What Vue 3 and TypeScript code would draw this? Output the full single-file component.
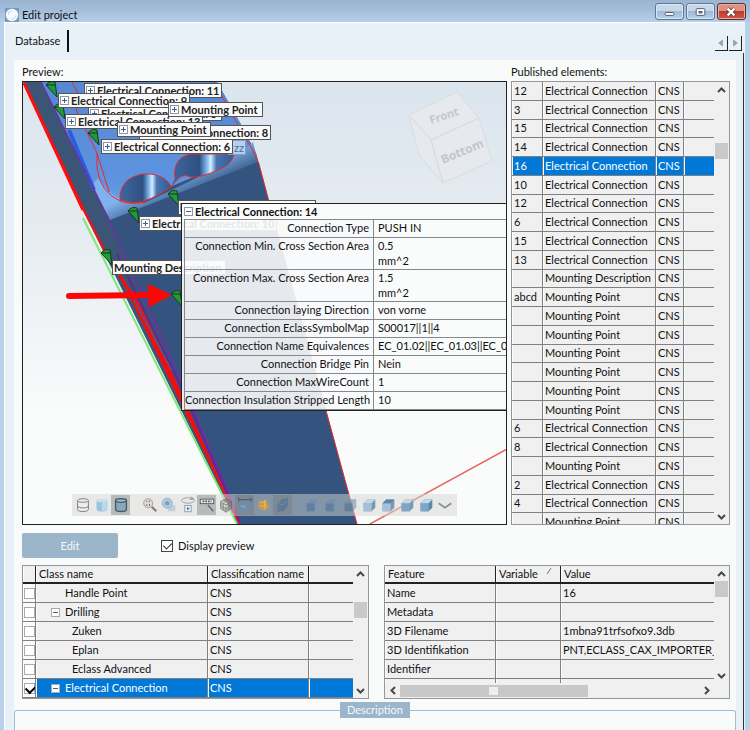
<script setup lang="ts">
import { ref } from 'vue'

interface Published { name: string; type: string }
interface Callout { text: string; x: number; y: number; w: number; plain?: boolean; faint?: boolean }
interface Feature { label: string; value: string; tall?: boolean }
interface ClassRow { name: string; level: number; branch: boolean; checked: boolean; selected?: boolean }

const EC = 'Electrical Connection'
const MP = 'Mounting Point'
const make = (name: string, type: string): Published => ({ name, type })

const published: Published[] = [
  ...['12', '3', '15', '14', '16', '10', '12', '6', '15', '13'].map((n) => make(n, EC)),
  make('', 'Mounting Description'),
  make('abcd', MP),
  ...Array.from({ length: 6 }, () => make('', MP)),
  make('6', EC), make('8', EC), make('', MP), make('2', EC), make('4', EC), make('', MP),
]
const selected = ref(4)

const callouts: Callout[] = [
  { text: 'Electrical Connection: 5', x: 65, y: 24, w: 134 },
  { text: 'Electrical Connection: 11', x: 61, y: 1, w: 138 },
  { text: 'Electrical Connection: 9', x: 35, y: 11, w: 132 },
  { text: 'Electrical Connection: 13', x: 42, y: 32, w: 138 },
  { text: 'Electrical Connection: 8', x: 116, y: 43, w: 132 },
  { text: 'zz', x: 205, y: 58, w: 18, plain: true, faint: true },
  { text: MP, x: 145, y: 20, w: 95 },
  { text: MP, x: 94, y: 40, w: 94 },
  { text: 'Electrical Connection: 6', x: 78, y: 57, w: 132 },
  { text: 'Electrical Connection: 10', x: 116, y: 134, w: 138 },
  { text: 'Mounting Description', x: 89, y: 178, w: 114, plain: true },
  { text: 'Electrical Connection: 15', x: 155, y: 118, w: 138 },
]

const features: Feature[] = [
  { label: 'Connection Type', value: 'PUSH IN' },
  { label: 'Connection Min. Cross Section Area', value: '0.5\nmm^2', tall: true },
  { label: 'Connection Max. Cross Section Area', value: '1.5\nmm^2', tall: true },
  { label: 'Connection laying Direction', value: 'von vorne' },
  { label: 'Connection EclassSymbolMap', value: 'S00017||1||4' },
  { label: 'Connection Name Equivalences', value: 'EC_01.02||EC_01.03||EC_01.04' },
  { label: 'Connection Bridge Pin', value: 'Nein' },
  { label: 'Connection MaxWireCount', value: '1' },
  { label: 'Connection Insulation Stripped Length', value: '10' },
]

const markers = [[57, 97], [65, 119], [99, 145], [139, 223], [179, 206], [112, 265], [182, 306]]

const classes = ref<ClassRow[]>([
  { name: 'Handle Point', level: 1, branch: false, checked: false },
  { name: 'Drilling', level: 1, branch: true, checked: false },
  { name: 'Zuken', level: 2, branch: false, checked: false },
  { name: 'Eplan', level: 2, branch: false, checked: false },
  { name: 'Eclass Advanced', level: 2, branch: false, checked: false },
  { name: EC, level: 1, branch: true, checked: true, selected: true },
])

const values = [
  ['Name', '16'],
  ['Metadata', ''],
  ['3D Filename', '1mbna91trfsofxo9.3db'],
  ['3D Identifikation', 'PNT,ECLASS_CAX_IMPORTER_01'],
  ['Identifier', ''],
]

const showPreview = ref(true)
const views = ['Top', 'Bottom', 'Left', 'Right', 'Front', 'Back', 'Isometric']
</script>

<template>
  <div class="window">
    <header class="titlebar">
      <svg class="app-icon" viewBox="0 0 14 14" aria-hidden="true">
        <rect width="14" height="14" fill="#6f9cc6" />
        <circle cx="7" cy="7" r="6.2" fill="#f6fafc" />
        <path d="M3 7a4 4 0 0 1 4-4M11 7a4 4 0 0 1-5 4" fill="none" stroke="#c3d4e2" />
      </svg>
      <h1>Edit project</h1>
      <div class="window-buttons">
        <button type="button" aria-label="Minimize">
          <svg viewBox="0 0 28 16"><rect x="9.500" y="8.500" width="9" height="3" rx="1" fill="#fff" stroke="#4c5a6c" /></svg>
        </button>
        <button type="button" aria-label="Maximize">
          <svg viewBox="0 0 28 16"><rect x="9.500" y="4.500" width="9" height="7" rx="1" fill="#fff" stroke="#4c5a6c" /><rect x="12.500" y="7.500" width="3" height="1.500" fill="#8aa5c4" stroke="#4c5a6c" /></svg>
        </button>
        <button type="button" class="close" aria-label="Close">
          <svg viewBox="0 0 28 16"><path d="M10 4.500l7 7M17 4.500l-7 7" stroke="#5b3535" stroke-width="4" /><path d="M10 4.500l7 7M17 4.500l-7 7" stroke="#fff" stroke-width="2.400" /></svg>
        </button>
      </div>
    </header>

    <div class="frame">
      <nav class="tabs">
        <button type="button" class="tab">Database</button>
        <div class="tab-scroll">
          <button type="button" aria-label="Previous tab"><svg viewBox="0 0 13 14"><path d="M8.500 3v8l-5-4z" fill="#9aa0a6" /></svg></button>
          <button type="button" aria-label="Next tab"><svg viewBox="0 0 13 14"><path d="M4.500 3v8l5-4z" fill="#9aa0a6" /></svg></button>
        </div>
      </nav>

      <main class="sheet">
        <div class="panel">
          <div class="upper">
            <section class="preview-block">
              <h2>Preview:</h2>
              <div class="preview">
                <svg class="scene" viewBox="23 82 483 442" preserveAspectRatio="xMinYMin slice" aria-hidden="true">
                  <defs>
                    <linearGradient id="sky" x1="0" y1="0" x2="0" y2="1">
                      <stop offset="0" stop-color="#dbe5ee" /><stop offset=".35" stop-color="#e6ecf1" /><stop offset=".75" stop-color="#fafbfb" />
                    </linearGradient>
                    <linearGradient id="top" x1="0" y1="0" x2="0" y2="1">
                      <stop offset="0" stop-color="#5588d2" /><stop offset=".75" stop-color="#5e93df" /><stop offset="1" stop-color="#6fa3ea" />
                    </linearGradient>
                    <linearGradient id="bevel" gradientUnits="userSpaceOnUse" x1="172" y1="176" x2="184" y2="202">
                      <stop offset="0" stop-color="#7fb2ee" /><stop offset="1" stop-color="#34547f" />
                    </linearGradient>
                    <linearGradient id="bore">
                      <stop offset="0" stop-color="#3f679e" /><stop offset=".45" stop-color="#2e5080" /><stop offset=".57" stop-color="#7fbaf4" /><stop offset=".63" stop-color="#d5efff" /><stop offset=".72" stop-color="#4774b2" /><stop offset="1" stop-color="#335a92" />
                    </linearGradient>
                  </defs>
                  <rect x="23" y="82" width="483" height="442" fill="url(#sky)" />
                  <path d="M41 82H217L243 128L256 153L270 204L357 524H239L125 258z" fill="#34547f" />
                  <path d="M23 82H43L107 215L126 258L241 524H237L82 208z" fill="#3b5576" />
                  <path d="M41 82H217L243 128L254 151L107 214z" fill="url(#top)" />
                  <path d="M92 185L107 214L110 220L258 162L253 142C235 160 190 182 146 202Q115 206 98 178z" fill="url(#bevel)" />
                  <path d="M69 130L94 190" stroke="#285ee0" stroke-width="4" />
                  <path d="M120 200C119 180 136 173 150 174C163 175 170 183 171 187Q150 202 133 203z" fill="url(#bore)" stroke="#e92929" />
                  <path d="M175 178C173 162 182 155 192 154H234Q232 165 218 170Q201 178 190 177C183 173 178 178 171 187" fill="url(#bore)" stroke="#e92929" />
                  <g fill="none" stroke="#e92929">
                    <path d="M72 82L82 101L76 110L97 153V168Q100 192 120 201Q130 205 146 202M97 153L109 192" />
                    <path d="M214 82L243 134Q254 150 259 164L269 202L357 524" />
                  </g>
                  <path d="M41 82L106 214L126 258L160 332L240 520" fill="none" stroke="#722da3" stroke-width="1.500" />
                  <path d="M117 254L184 393L240 524" fill="none" stroke="#65259b" stroke-width="2" />
                  <path d="M24 83L83 210" stroke="#ff0d0d" stroke-width="3" />
                  <path d="M58 154L83 207L107 254L138 302L178 387L239 524L182 405L127 290L103 249L83 210z" fill="#f40b0b" stroke="#ff0d0d" />
                  <path d="M134 300L172 371" stroke="#5b5a80" stroke-width="1.500" />
                  <path d="M83 218L237 524" stroke="#7de87b" stroke-width="2" />
                  <path d="M370 524L507 449" stroke="#e4665e" stroke-width="1.500" />
                  <g class="cube">
                    <path d="M409 115L457 92L479 118L431 140zM431 140L479 118L492 161L443 183zM409 115L431 140L443 183L419 155z" />
                    <text transform="translate(431 124) rotate(-18)">Front</text>
                    <text class="big" transform="translate(443 164) rotate(-23)">Bottom</text>
                  </g>
                  <g fill="#25963a" stroke="#123a1c">
                    <path v-for="([x, y], i) in markers" :key="i" :d="`M${x - 11} ${y - 12}Q${x - 7} ${y - 17} ${x - 2} ${y - 15}L${x} ${y}zM${x - 11} ${y - 12}L${x - 2} ${y - 12}`" />
                  </g>
                  <path d="M69 296L148 295" stroke="#fa0808" stroke-width="6" stroke-linecap="round" />
                  <path d="M149 286L169 295L150 305z" fill="#fa0808" stroke="#fa0808" stroke-width="3" stroke-linejoin="round" />
                </svg>

                <div
                  v-for="(c, i) in callouts"
                  :key="i"
                  class="callout"
                  :class="{ faint: c.faint }"
                  :style="{ left: c.x + 'px', top: c.y + 'px', minWidth: c.w + 'px' }"
                >
                  <span v-if="!c.plain" class="node plus"></span>{{ c.text }}
                </div>

                <div class="details">
                  <div class="details-title"><span class="node"></span>Electrical Connection: 14</div>
                  <table>
                    <tbody>
                      <tr v-for="f in features" :key="f.label" :class="{ tall: f.tall }">
                        <th scope="row">{{ f.label }}</th>
                        <td>{{ f.value }}</td>
                      </tr>
                    </tbody>
                  </table>
                </div>

                <div class="toolbar">
                  <div class="tool-group">
                    <button type="button" aria-label="Wireframe"><svg viewBox="0 0 18 20"><path d="M3 5v10c0 3 12 3 12 0V5M3 11c0 3 12 3 12 0" fill="#eee" stroke="#777" /><ellipse cx="9" cy="5" rx="6" ry="2" fill="#eee" stroke="#777" /></svg></button>
                    <button type="button" aria-label="Shaded"><svg viewBox="0 0 18 20"><path d="M3 5v10c0 3 12 3 12 0V5z" fill="#9dc3dc" /><path d="M9 5v12c4 0 6-1 6-2V5z" fill="#b9d9e9" /><ellipse cx="9" cy="5" rx="6" ry="2" fill="#c6dfec" /></svg></button>
                    <button type="button" class="on" aria-label="Shaded with edges"><svg viewBox="0 0 18 20"><path d="M3 5v10c0 3 12 3 12 0V5z" fill="#88a9bb" stroke="#465a68" stroke-width="1.500" /><ellipse cx="9" cy="5" rx="6" ry="2" fill="#a8c0cc" stroke="#465a68" stroke-width="1.500" /></svg></button>
                  </div>
                  <div class="tool-group">
                    <button type="button" aria-label="Zoom area"><svg viewBox="0 0 18 20"><circle cx="7" cy="8" r="5" fill="#ddd" stroke="#999" /><path d="M11 12l5 5" stroke="#887c7c" stroke-width="2.500" /><path d="M5 6h1M8 6h1M5 10h1M8 10h1" stroke="#94566b" stroke-width="2" /></svg></button>
                    <button type="button" aria-label="Transparency"><svg viewBox="0 0 18 20"><rect x="8" y="10" width="8" height="7" fill="#bdd1df" /><circle cx="7" cy="8" r="5.500" fill="#b3cde0" stroke="#93adc0" /><circle cx="7" cy="8" r="2.500" fill="#7e9fb8" /></svg></button>
                    <button type="button" aria-label="Rotate"><svg viewBox="0 0 18 20"><ellipse cx="9" cy="5" rx="7" ry="3" fill="none" stroke="#999" /><path d="M12 1l3 2-4 1" fill="none" stroke="#888" /><rect x="5.500" y="10.500" width="7" height="7" fill="#eef4f7" stroke="#7d9bad" /><path d="M8 12v4l3-2z" fill="#43779b" /></svg></button>
                    <button type="button" class="on" aria-label="Labels"><svg viewBox="0 0 18 20"><rect x="1.500" y="3.500" width="15" height="5" fill="#eee" stroke="#555" /><path d="M4 6h10" stroke="#555" stroke-width="2" stroke-dasharray="2 1" /><path d="M10 10l6 7" stroke="#666" stroke-width="1.500" /></svg></button>
                    <button type="button" class="soft" aria-label="Mesh"><svg viewBox="0 0 18 20"><path d="M9 3l6 3v8l-6 4-6-4V6zM3 6l6 4 6-4M9 10v8M3 10l6 4 6-4M6 4l6 4M12 4L6 8M6 8v8M12 8v8" fill="#888" stroke="#555" /></svg></button>
                    <button type="button" class="on soft" aria-label="Dimensions"><svg viewBox="0 0 18 20"><path d="M2 4h14M2 2v4M16 2v4" stroke="#34495c" stroke-width="1.500" /><path d="M3 9l5-2 7 2v7H3z" fill="#5f92c0" /><path d="M3 12q5-5 8 2" fill="#80aed0" /></svg></button>
                    <button type="button" aria-label="Section"><svg viewBox="0 0 18 20"><path d="M3 6l9-2 3 9-8 4-5-5z" fill="#c1975b" /><path d="M5 7h6M5 11h7M10 5v10" stroke="#e9b64f" stroke-width="2" stroke-dasharray="2 1" /></svg></button>
                    <button type="button" class="on soft" aria-label="Explode"><svg viewBox="0 0 18 20"><path d="M4 9l4-5 6-1v7l-4 6-7 1z" fill="#4d7097" stroke="#466c94" /><path d="M5 9l4 1 5-5" fill="none" stroke="#7894b0" stroke-dasharray="2 1" /></svg></button>
                  </div>
                  <div class="tool-group">
                    <button v-for="(v, i) in views" :key="v" type="button" :aria-label="v + ' view'">
                      <svg viewBox="0 0 18 20" :class="'view-' + i"><path class="side" d="M3 8l4-4h9v9l-4 4H3z" /><path class="face" d="M3 8h9v9H3z" /><path class="lid" d="M3 8l4-4h9l-4 4z" /></svg>
                    </button>
                    <button type="button" aria-label="More"><svg viewBox="0 0 18 20"><path d="M2 8l7 5 7-5" fill="none" stroke="#8393a2" stroke-width="2" /></svg></button>
                  </div>
                </div>
              </div>
            </section>

            <section class="published-block">
              <h2>Published elements:</h2>
              <div class="grid-box published">
                <div class="grid-view">
                  <table>
                    <colgroup><col class="c-id" /><col /><col class="c-cns" /><col class="c-rest" /></colgroup>
                    <tbody>
                      <tr v-for="(p, i) in published" :key="i" :class="{ selected: i === selected }" @click="selected = i">
                        <td>{{ p.name }}</td><td>{{ p.type }}</td><td>CNS</td><td></td>
                      </tr>
                    </tbody>
                  </table>
                </div>
                <div class="vscroll">
                  <button type="button" aria-label="Scroll up"><svg viewBox="0 0 9 6"><path d="M1 5l3.500-3.500L8 5" /></svg></button>
                  <span class="thumb low"></span>
                  <button type="button" aria-label="Scroll down"><svg viewBox="0 0 9 6"><path d="M1 1l3.500 3.500L8 1" /></svg></button>
                </div>
              </div>
            </section>
          </div>

          <div class="actions">
            <button type="button" class="edit">Edit</button>
            <label class="check"><input v-model="showPreview" type="checkbox" />Display preview</label>
          </div>

          <div class="lower">
            <div class="grid-box classes">
              <div class="grid-view">
                <table>
                  <colgroup><col class="c-check" /><col /><col class="c-class" /><col class="c-tail" /></colgroup>
                  <thead>
                    <tr><th></th><th scope="col">Class name</th><th scope="col">Classification name</th><th></th></tr>
                  </thead>
                  <tbody>
                    <tr v-for="c in classes" :key="c.name" :class="{ selected: c.selected }">
                      <td class="tick"><input v-model="c.checked" type="checkbox" :aria-label="c.name" /></td>
                      <td><span class="tree" :class="'level-' + c.level"><span v-if="c.branch" class="node"></span><span v-else class="leaf"></span>{{ c.name }}</span></td>
                      <td>CNS</td>
                      <td></td>
                    </tr>
                  </tbody>
                </table>
              </div>
              <div class="vscroll">
                <button type="button" aria-label="Scroll up"><svg viewBox="0 0 9 6"><path d="M1 5l3.500-3.500L8 5" /></svg></button>
                <span class="thumb mid"></span>
                <button type="button" aria-label="Scroll down"><svg viewBox="0 0 9 6"><path d="M1 1l3.500 3.500L8 1" /></svg></button>
              </div>
            </div>

            <div class="grid-box values">
              <div class="grid-view">
                <table>
                  <colgroup><col class="c-feature" /><col class="c-variable" /><col /></colgroup>
                  <thead>
                    <tr>
                      <th scope="col">Feature</th>
                      <th scope="col">Variable<svg class="sort" viewBox="0 0 6 8" aria-hidden="true"><path d="M1 7l4-6" stroke="#777" /></svg></th>
                      <th scope="col">Value</th>
                    </tr>
                  </thead>
                  <tbody>
                    <tr v-for="[k, v] in values" :key="k"><td>{{ k }}</td><td></td><td>{{ v }}</td></tr>
                    <tr><td></td><td></td><td></td></tr>
                  </tbody>
                </table>
              </div>
              <div class="vscroll">
                <button type="button" aria-label="Scroll up"><svg viewBox="0 0 9 6"><path d="M1 5l3.500-3.500L8 5" /></svg></button>
                <span class="thumb"></span>
                <button type="button" aria-label="Scroll down"><svg viewBox="0 0 9 6"><path d="M1 1l3.500 3.500L8 1" /></svg></button>
              </div>
              <div class="hscroll">
                <button type="button" aria-label="Scroll left"><svg viewBox="0 0 6 9"><path d="M5 1L1.500 4.500L5 8" /></svg></button>
                <span class="hthumb"><i></i></span>
                <button type="button" aria-label="Scroll right"><svg viewBox="0 0 6 9"><path d="M1 1l3.500 3.500L1 8" /></svg></button>
              </div>
            </div>
          </div>

          <fieldset class="description">
            <legend>Description</legend>
          </fieldset>
        </div>
      </main>
    </div>
  </div>
</template>

<style>
body {
  overflow: hidden;
}
</style>

<style scoped>
* {
  box-sizing: border-box;
}
.window {
  display: flex;
  flex-direction: column;
  height: 100vh;
  overflow: hidden;
  background: #b9d0e9;
  color: #111;
  font: 11px/16px Lato, "Open Sans", sans-serif;
}
button {
  display: flex;
  align-items: center;
  justify-content: center;
  padding: 0;
  border: 0;
  background: none;
  color: inherit;
  font: inherit;
}
h1, h2 {
  margin: 0;
  font-size: inherit;
  font-weight: 400;
}
.titlebar {
  display: flex;
  flex: none;
  align-items: flex-end;
  height: 22px;
  padding: 0 4px 0 5px;
  background: linear-gradient(#9bb5d1, #a3bcd9 45%, #b8cfe8);
}
.titlebar h1 {
  line-height: 14px;
}
.app-icon {
  width: 14px;
  height: 14px;
  margin-right: 3px;
}
.window-buttons {
  display: flex;
  gap: 2px;
  align-self: flex-start;
  margin: 3px 0 0 auto;
}
.window-buttons button {
  width: 29px;
  height: 17px;
  border: 1px solid #5d7796;
  border-radius: 3px;
  background: linear-gradient(#c6d7ea 45%, #a0b9d6 50%, #b9d0e8);
  box-shadow: inset 0 0 0 1px #dbe7f3;
}
.window-buttons .close {
  border-color: #5c2b2b;
  background: linear-gradient(#dd9184 45%, #c0382c 50%, #cf5a45);
  box-shadow: inset 0 0 0 1px #e8aea4;
}
.window-buttons svg {
  width: 28px;
  height: 16px;
}
.frame {
  display: flex;
  flex: 1;
  flex-direction: column;
  min-height: 0;
  margin: 0 5px 0 4px;
  border-left: 1px solid #fff;
  border-top: 1px solid #fff;
  background: #e8f1f7;
}
.tabs {
  display: flex;
  flex: none;
  justify-content: space-between;
  height: 30px;
  padding: 7px 3px 0 10px;
}
.tab {
  height: 22px;
  padding-right: 7px;
  border-right: 2px solid #111;
}
.tab-scroll {
  display: flex;
  gap: 1px;
  margin-top: 6px;
}
.tab-scroll button {
  width: 13px;
  height: 15px;
  border-right: 1px solid #222;
  border-bottom: 1px solid #222;
}
.tab-scroll svg {
  width: 13px;
  height: 14px;
}
.sheet {
  flex: 1;
  min-height: 0;
  padding: 7px 7px 0 9px;
  border-right: 1px solid #333;
  margin-right: 1px;
}
.panel {
  display: flex;
  flex-direction: column;
  height: 100%;
  padding: 4px 0 0;
  background: #f9fbfb;
}
.upper {
  display: grid;
  grid-template-columns: 485fr 219fr;
  gap: 4px;
  padding: 0 6px 0 8px;
}
h2 {
  height: 17px;
}
.preview,
.published {
  height: 444px;
}
.preview {
  position: relative;
  overflow: hidden;
  border: 1px solid #222;
}
.scene {
  display: block;
  width: 100%;
  height: 100%;
}
.cube path {
  fill: #e6e9ed;
  stroke: #d9dde1;
}
.cube text {
  fill: #c3c7cc;
  font: 700 11px "Open Sans", sans-serif;
}
.cube .big {
  font-size: 12px;
}
.callout {
  position: absolute;
  display: flex;
  align-items: center;
  gap: 2px;
  height: 15px;
  padding: 0 1px;
  border: 1px solid #555;
  background: #fafafa;
  color: #222;
  font-weight: 700;
  white-space: nowrap;
}
.faint {
  border-color: #7f9fc4;
  background: #b6d0ee;
  color: #456ca0;
  font-weight: 400;
  justify-content: flex-end;
}
.node {
  display: inline-block;
  flex: none;
  width: 9px;
  height: 9px;
  border: 1px solid #8b98aa;
  background: linear-gradient(#405d92, #405d92) center / 5px 1px no-repeat, #fff;
}
.node.plus {
  background: linear-gradient(#405d92, #405d92) center / 5px 1px no-repeat, linear-gradient(#405d92, #405d92) center / 1px 5px no-repeat, #fff;
}
.details {
  position: absolute;
  top: 121px;
  left: 158px;
  right: -2px;
  border: 1px solid #222;
  background: rgba(250, 251, 252, 0.9);
}
.details-title {
  display: flex;
  align-items: center;
  gap: 2px;
  height: 15px;
  padding-left: 2px;
  background: #fafbfb;
  font-weight: 700;
}
.details table {
  width: 100%;
  margin-left: 2px;
  border-collapse: collapse;
  table-layout: fixed;
}
.details tr {
  height: 18px;
}
.details tr.tall {
  height: 32px;
}
.details th,
.details td {
  padding: 0 4px;
  border: 1px solid #85888c;
  font-weight: 400;
  line-height: 15px;
  vertical-align: top;
}
.details th {
  width: 189px;
  padding-left: 0;
  text-align: right;
  white-space: nowrap;
}
.details td {
  background: #fafbfb;
  white-space: pre;
}
.toolbar {
  position: absolute;
  left: 49px;
  bottom: 8px;
  display: flex;
  gap: 10px;
  height: 22px;
  padding: 1px 3px 1px 1px;
  background: rgba(213, 213, 210, 0.5);
}
.tool-group {
  display: flex;
}
.tool-group button {
  width: 19px;
  height: 20px;
}
.tool-group .on {
  background: rgba(110, 120, 120, 0.4);
}
.tool-group .soft svg {
  opacity: 0.6;
}
.tool-group svg {
  width: 18px;
  height: 18px;
}
.side { fill: #7898b5; }
.face { fill: #a3c0d6; }
.lid { fill: #c4d8e5; }
.tool-group .view-0,
.tool-group .view-1,
.tool-group .view-2 { opacity: 0.6; }
.view-0 .face, .view-1 .face, .view-2 .face { fill: #4f7197; }
.view-0 .lid, .view-1 .lid, .view-2 .lid { fill: #6e8eb2; }
.view-4 .lid, .view-6 .side { fill: #5b87ad; }
.view-5 .face, .view-6 .face { fill: #7fa6c6; }

.grid-box {
  display: grid;
  grid-template-columns: minmax(0, 1fr) 15px;
  overflow: hidden;
  border: 1px solid #92979f;
  background: #f0f0f0;
}
.grid-view {
  overflow: hidden;
  min-height: 0;
}
.grid-view table {
  width: 100%;
  border-collapse: separate;
  border-spacing: 0;
  table-layout: fixed;
}
.published table {
  height: 450px;
}
.grid-view tr {
  height: 18px;
}
.grid-view td,
.grid-view th {
  padding: 0 2px;
  border-right: 1px solid #808080;
  border-bottom: 1px solid #808080;
  box-shadow: inset 1px 0 #fdfdfd;
  font-weight: 400;
  line-height: 16px;
  text-align: left;
  white-space: nowrap;
  overflow: hidden;
}
.grid-view td:last-child,
.grid-view th:last-child {
  border-right: 0;
}
.grid-view th {
  padding-left: 3px;
  border-right-color: #222;
  border-bottom: 2px solid #222;
}
.grid-view .selected td {
  background: #0078d7;
  color: #fff;
}
.c-id { width: 31px; }
.c-cns { width: 28px; }
.c-rest { width: 30px; }
.c-check { width: 13px; }
.c-class { width: 101px; }
.c-tail { width: 44px; }
.c-feature { width: 111px; }
.c-variable { width: 65px; }
.vscroll {
  display: flex;
  flex-direction: column;
  align-items: center;
}
.vscroll button {
  width: 15px;
  height: 15px;
}
.vscroll button:last-child {
  margin-top: auto;
}
.vscroll svg {
  width: 9px;
  height: 6px;
}
.vscroll path,
.hscroll path {
  fill: none;
  stroke: #484848;
  stroke-width: 2;
}
.thumb {
  width: 13px;
  height: 16px;
  background: #c9c9c9;
}
.thumb.low { margin-top: 46px; }
.thumb.mid { margin-top: 21px; }
.actions {
  display: flex;
  align-items: center;
  gap: 43px;
  padding: 8px 8px 7px;
}
.edit {
  width: 96px;
  height: 25px;
  border-radius: 2px;
  background: #9bb5cb;
  color: #f4f8fb;
}
.check {
  display: flex;
  align-items: center;
  gap: 5px;
}
input[type="checkbox"] {
  appearance: none;
  width: 12px;
  height: 12px;
  margin: 0;
  border: 1px solid #444;
  background: #fff;
}
input[type="checkbox"]:checked::after {
  content: "";
  display: block;
  width: 4px;
  height: 7px;
  margin: 0 3px;
  border: solid #222;
  border-width: 0 1px 1px 0;
  transform: rotate(45deg);
}
.lower {
  display: grid;
  grid-template-columns: 347fr 346fr;
  gap: 15px;
  padding: 0 6px 0 8px;
}
.classes,
.values {
  height: 134px;
}
.classes table,
.values table {
  height: 132px;
}
.grid-view .tick {
  padding: 0;
  background: #fafafa;
  color: #111;
}
.grid-view .selected .tick {
  background: #fafafa;
}
.tick input[type="checkbox"] {
  display: block;
  width: 11px;
  height: 11px;
  margin: 0 0 0 1px;
  border-color: #aaa;
}
.tick input[type="checkbox"]:checked::after {
  width: 5px;
  margin: 0 2px;
  border-width: 0 2px 2px 0;
  border-color: #000;
}
.tree {
  display: flex;
  align-items: center;
  gap: 5px;
}
.tree .node {
  border-color: #aaa;
}
.leaf {
  width: 9px;
}
.level-1 { padding-left: 13px; }
.level-2 { padding-left: 20px; }
.sort {
  width: 6px;
  height: 8px;
  margin: 0 0 3px 8px;
}
.values {
  grid-template-rows: minmax(0, 1fr) 15px;
}
.hscroll {
  display: flex;
  grid-column: 1;
  align-items: center;
}
.hscroll button {
  width: 15px;
  height: 15px;
}
.hscroll button:last-child {
  margin-left: auto;
}
.hscroll svg {
  width: 6px;
  height: 9px;
}
.hthumb {
  display: flex;
  justify-content: center;
  width: 57%;
  height: 12px;
  background: #c8c8c8;
}
.hthumb i {
  width: 9px;
  height: 8px;
  margin-top: 2px;
  background: #eee;
}
.description {
  flex: 1 0 24px;
  min-width: 0;
  margin: 3px 0 0;
  padding: 0;
  border: 1px solid #a3bdd3;
  border-bottom: 0;
  border-radius: 3px 3px 0 0;
}
.description legend {
  margin: 0 auto;
  padding: 0 7px;
  background: #9bb5cb;
  color: #f4f8fb;
}
</style>
